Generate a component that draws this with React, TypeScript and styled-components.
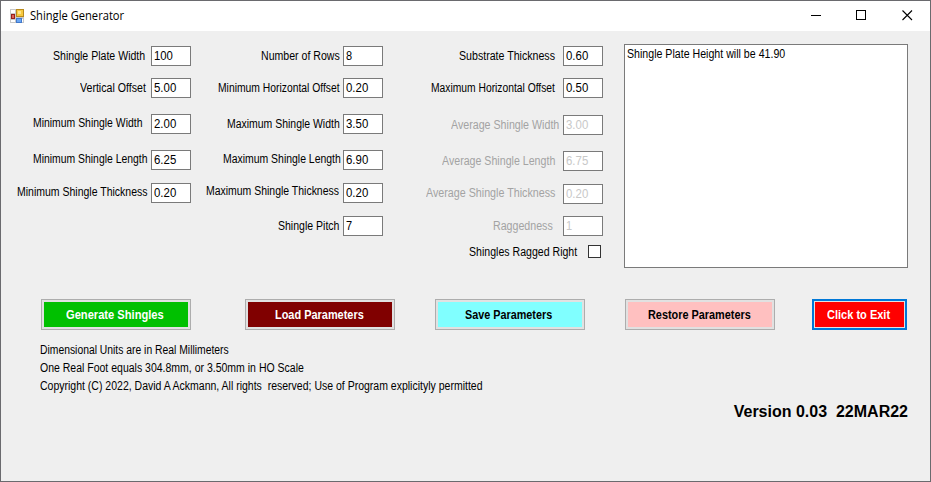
import React, { useLayoutEffect, useRef, useState } from 'react';
import styled, { createGlobalStyle } from 'styled-components';

const Global = createGlobalStyle`
  * { box-sizing: border-box; }
  body { margin: 0; background: #efefef; font-family: "Liberation Sans", Arial, sans-serif; }
`;

const Window = styled.div`
  width: 931px;
  height: 482px;
  border: 1px solid #6a6a6e;
  background: #efefef;
  color: #000;
  overflow: hidden;
  display: flex;
  flex-direction: column;
`;

const TitleBar = styled.header`
  height: 30px;
  flex: none;
  background: #fff;
  display: flex;
  align-items: center;
  padding-left: 9px;
`;

const Title = styled.div`
  font: 12px/16px "Open Sans", "Noto Sans", sans-serif;
  margin-left: 5px;
  flex: 1;
`;

const Caption = styled.div`
  width: 46px;
  height: 30px;
  svg { display: block; }
`;

const FitBox = styled.span<{ $w: number }>`
  display: inline-block;
  width: ${p => p.$w}px;
  height: 16px;
  line-height: 16px;
  white-space: pre;
  text-align: left;
  vertical-align: top;
`;

const FitInner = styled.span`
  display: inline-block;
  transform-origin: 0 50%;
`;

/* Condenses a run of text horizontally to a given width. */
function Fit({ w, children }: { w: number; children: string }) {
  const ref = useRef<HTMLSpanElement>(null);
  const [scale, setScale] = useState(1);
  useLayoutEffect(() => {
    if (ref.current) setScale((w - 0.6) / ref.current.offsetWidth);
  }, [w, children]);
  return (
    <FitBox $w={w}>
      <FitInner ref={ref} style={{ transform: `scaleX(${scale})` }}>{children}</FitInner>
    </FitBox>
  );
}

const Client = styled.main`
  flex: 1;
  padding: 13px 22px 0 0;
  display: flex;
  flex-direction: column;
`;

const Top = styled.section`
  display: flex;
  height: 224px;
`;

const Column = styled.div<{ $w: number }>`
  width: ${p => p.$w}px;
  padding-top: 2px;
  flex: none;
`;

const Row = styled.div<{ $gap: number }>`
  display: flex;
  justify-content: flex-end;
  height: 20px;
  margin-bottom: ${p => p.$gap}px;
`;

const Label = styled.label<{ $up?: number; $right: number; $off?: boolean }>`
  font-size: 12px;
  margin-top: ${p => 2 - (p.$up ?? 0)}px;
  margin-right: ${p => p.$right}px;
  color: ${p => (p.$off ? '#a3a3a3' : '#000')};
`;

const Box = styled.div<{ $off?: boolean }>`
  width: 40px;
  height: 20px;
  border: 1px solid #7a7a7a;
  background: #fff;
  padding: 1px 0 0 2px;
  font-size: 12px;
  color: ${p => (p.$off ? '#c8c8c8' : '#000')};
`;

const Check = styled.div`
  width: 13px;
  height: 13px;
  border: 1px solid #333;
  background: #fff;
  margin-right: 2px;
`;

const Memo = styled.div`
  width: 284px;
  height: 224px;
  margin-left: 21px;
  border: 1px solid #7a7a7a;
  background: #fff;
  padding: 1px 2px;
  font-size: 12px;
`;

const Buttons = styled.section`
  display: flex;
  padding-left: 40px;
  margin-top: 31px;
`;

const Button = styled.button<{ $bg: string; $fg?: string; $w?: number; $ml?: number; $focus?: boolean }>`
  width: ${p => p.$w ?? 150}px;
  height: 31px;
  margin: 0 0 0 ${p => p.$ml ?? 0}px;
  padding: 0 2px 0 0;
  border: ${p => (p.$focus ? '2px solid #0078d7' : '1px solid #adadad')};
  box-shadow: inset 0 0 0 ${p => (p.$focus ? 1 : 2)}px #e1e1e1;
  background: ${p => p.$bg};
  color: ${p => p.$fg ?? '#000'};
  font: bold 12px/16px "Liberation Sans", Arial, sans-serif;
  flex: none;
`;

const Notes = styled.section`
  padding: 12px 0 0 39px;
  font-size: 12px;
`;

const Note = styled.div`
  height: 18px;
`;

const Version = styled.div`
  font: bold 16px/20px "Liberation Sans", Arial, sans-serif;
  white-space: pre;
  text-align: right;
  margin-top: 6px;
`;

type Field = { t: string; w: number; r: number; v: string; gap?: number; up?: number; off?: boolean };

const columns: { width: number; fields: Field[] }[] = [
  { width: 190, fields: [
    { t: 'Shingle Plate Width', w: 93, r: 5, v: '100', gap: 12 },
    { t: 'Vertical Offset', w: 66, r: 5, v: '5.00', gap: 16 },
    { t: 'Minimum Shingle Width', w: 110, r: 8, v: '2.00', gap: 16, up: 1 },
    { t: 'Minimum Shingle Length', w: 115, r: 3, v: '6.25', gap: 13, up: 1 },
    { t: 'Minimum Shingle Thickness', w: 131, r: 3, v: '0.20', up: 1 },
  ] },
  { width: 192, fields: [
    { t: 'Number of Rows', w: 79, r: 3, v: '8', gap: 12 },
    { t: 'Minimum Horizontal Offset', w: 122, r: 3, v: '0.20', gap: 16 },
    { t: 'Maximum Shingle Width', w: 113, r: 3, v: '3.50', gap: 16 },
    { t: 'Maximum Shingle Length', w: 118, r: 2, v: '6.90', gap: 13, up: 1 },
    { t: 'Maximum Shingle Thickness', w: 134, r: 3, v: '0.20', gap: 13, up: 2 },
    { t: 'Shingle Pitch', w: 62, r: 3, v: '7' },
  ] },
  { width: 220, fields: [
    { t: 'Substrate Thickness', w: 97, r: 7, v: '0.60', gap: 12 },
    { t: 'Maximum Horizontal Offset', w: 125, r: 7, v: '0.50', gap: 17 },
    { t: 'Average Shingle Width', w: 109, r: 3, v: '3.00', gap: 16, off: true },
    { t: 'Average Shingle Length', w: 114, r: 7, v: '6.75', gap: 13, off: true },
    { t: 'Average Shingle Thickness', w: 130, r: 7, v: '0.20', gap: 12, up: 1, off: true },
    { t: 'Raggedness', w: 60, r: 10, v: '1', gap: 9, off: true },
  ] },
];

const valueWidth = (v: string) => (v.length === 1 ? 7 : v.length === 3 ? 19.5 : 22.5);

const AppIcon = () => (
  <svg width="15" height="15" viewBox="0 0 15 15" shapeRendering="crispEdges">
    <rect x="0" y="0" width="14" height="14" fill="#c8c8c8" />
    <path d="M1 1h4v3h-4zM1 11h4v2h-4zM12 10h1v3h-1z" fill="#fff" />
    <rect x="6" y="0" width="8" height="8" fill="#b98a1c" />
    <rect x="7" y="1" width="6" height="6" fill="#f6c93f" />
    <rect x="8" y="2" width="3" height="3" fill="#ffe487" />
    <rect x="1" y="5" width="4" height="5" fill="#971f1b" />
    <rect x="2" y="6" width="2" height="3" fill="#dd6257" />
    <rect x="6" y="9" width="6" height="5" fill="#4379cb" />
    <rect x="7" y="10" width="4" height="3" fill="#69a6f4" />
  </svg>
);

export default function App() {
  return (
    <>
      <Global />
      <Window>
        <TitleBar>
          <AppIcon />
          <Title><Fit w={94.5}>Shingle Generator</Fit></Title>
          <Caption><svg width="46" height="30"><path d="M19 14.5h10" stroke="#000" /></svg></Caption>
          <Caption><svg width="46" height="30"><rect x="18.5" y="9.5" width="9" height="9" fill="none" stroke="#000" /></svg></Caption>
          <Caption><svg width="46" height="30"><path d="M18.5 9.5l9.5 9.5M28 9.5l-9.5 9.5" stroke="#000" strokeWidth="1.1" /></svg></Caption>
        </TitleBar>
        <Client>
          <Top>
            {columns.map((c, i) => (
              <Column key={i} $w={c.width}>
                {c.fields.map(f => (
                  <Row key={f.t} $gap={f.gap ?? 0}>
                    <Label $up={f.up} $right={f.r} $off={f.off}><Fit w={f.w}>{f.t}</Fit></Label>
                    <Box $off={f.off}><Fit w={valueWidth(f.v)}>{f.v}</Fit></Box>
                  </Row>
                ))}
                {i === 2 && (
                  <Row $gap={0}>
                    <Label $right={10} $up={3}><Fit w={109}>Shingles Ragged Right</Fit></Label>
                    <Check />
                  </Row>
                )}
              </Column>
            ))}
            <Memo><Fit w={159}>Shingle Plate Height will be 41.90</Fit></Memo>
          </Top>
          <Buttons>
            <Button $bg="#00c000" $fg="#fff"><Fit w={98}>Generate Shingles</Fit></Button>
            <Button $bg="#800000" $fg="#fff" $ml={54}><Fit w={89}>Load Parameters</Fit></Button>
            <Button $bg="#80ffff" $ml={40}><Fit w={88}>Save Parameters</Fit></Button>
            <Button $bg="#ffc0c0" $ml={40}><Fit w={103}>Restore Parameters</Fit></Button>
            <Button $bg="#ff0000" $fg="#fff" $ml={37} $w={95} $focus><Fit w={64}>Click to Exit</Fit></Button>
          </Buttons>
          <Notes>
            <Note><Fit w={189.5}>Dimensional Units are in Real Millimeters</Fit></Note>
            <Note><Fit w={264}>One Real Foot equals 304.8mm, or 3.50mm in HO Scale</Fit></Note>
            <Note><Fit w={443.5}>Copyright (C) 2022, David A Ackmann, All rights  reserved; Use of Program explicityly permitted</Fit></Note>
          </Notes>
          <Version>Version 0.03  22MAR22</Version>
        </Client>
      </Window>
    </>
  );
}
